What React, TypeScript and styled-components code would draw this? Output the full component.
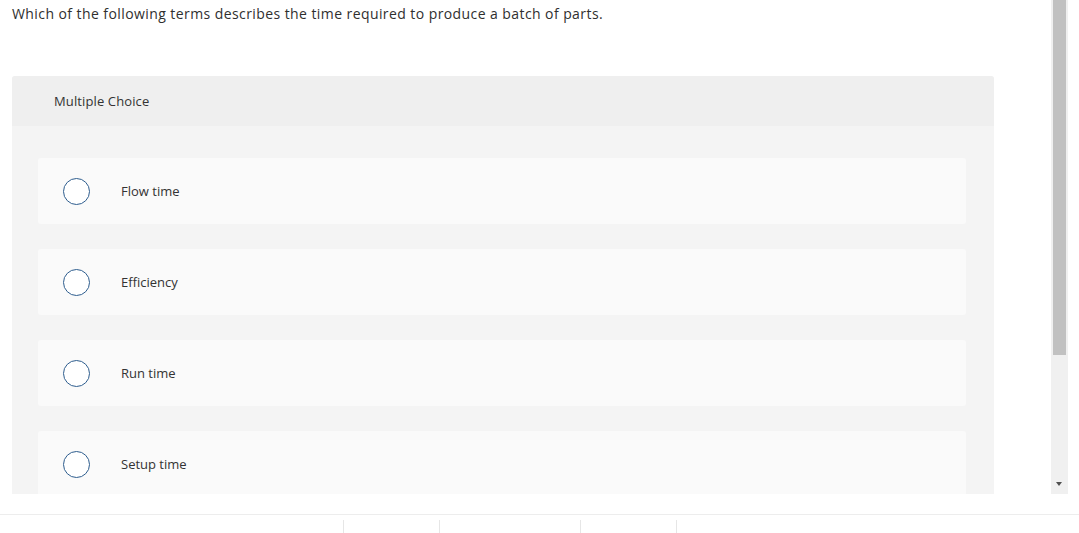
import styled, { createGlobalStyle } from "styled-components";

const GlobalStyle = createGlobalStyle`
  html, body {
    margin: 0;
    padding: 0;
    background: #ffffff;
    font-family: "Open Sans", Arial, sans-serif;
    color: #333333;
  }
`;

const Page = styled.div`
  width: 1079px;
  height: 533px;
  overflow: hidden;
  display: flex;
  flex-direction: column;
`;

const Viewport = styled.div`
  height: 494px;
  display: flex;
  flex-direction: row;
`;

const Content = styled.div`
  width: 1051px;
  height: 494px;
  overflow: hidden;
  display: flex;
  flex-direction: column;
`;

const Question = styled.p`
  margin: 0;
  padding: 5px 0 0 12px;
  height: 71px;
  font-size: 14px;
  line-height: 18px;
  letter-spacing: 0.42px;
  color: #2f2f2f;
`;

const Panel = styled.div`
  margin-left: 12px;
  width: 982px;
  flex: 1;
  background: #f4f4f4;
  border-radius: 3px 3px 0 0;
  overflow: hidden;
`;

const PanelHeader = styled.div`
  height: 50px;
  background: #efefef;
  display: flex;
  align-items: center;
  padding-left: 42px;
  font-size: 13px;
  letter-spacing: 0.12px;
  color: #333333;
`;

const Choices = styled.div`
  display: flex;
  flex-direction: column;
  gap: 25px;
  padding: 32px 28px 0 26px;
`;

const Choice = styled.label`
  height: 66px;
  flex-shrink: 0;
  background: #fafafa;
  border-radius: 3px;
  display: flex;
  align-items: center;
  padding-left: 25px;
  font-size: 13px;
  color: #333333;
  cursor: pointer;
`;

const Radio = styled.span`
  width: 25px;
  height: 25px;
  border-radius: 50%;
  border: 1.5px solid #2e5d8e;
  background: #ffffff;
  flex-shrink: 0;
  margin-right: 31px;
`;

const Scrollbar = styled.div`
  width: 17px;
  height: 494px;
  background: #f0f0f0;
  position: relative;
`;

const Thumb = styled.div`
  margin-left: 2px;
  width: 13px;
  height: 355px;
  background: #c1c1c1;
`;

const DownArrow = styled.div`
  position: absolute;
  left: 5px;
  top: 482px;
  width: 0;
  height: 0;
  border-left: 3.5px solid transparent;
  border-right: 3.5px solid transparent;
  border-top: 4px solid #505050;
`;

const Footer = styled.div`
  margin-top: 20px;
  border-top: 1px solid #ededed;
  display: flex;
  padding: 5px 0 0 343px;
  height: 14px;
`;

const FooterCell = styled.div<{ $w: number }>`
  width: ${p => p.$w}px;
  border-left: 1px solid #e6e6e6;
`;

const options = ["Flow time", "Efficiency", "Run time", "Setup time"];

export default function App() {
  return (
    <Page>
      <GlobalStyle />
      <Viewport>
        <Content>
          <Question>
            Which of the following terms describes the time required to produce a batch of parts.
          </Question>
          <Panel>
            <PanelHeader>Multiple Choice</PanelHeader>
            <Choices>
              {options.map(o => (
                <Choice key={o}>
                  <Radio />
                  {o}
                </Choice>
              ))}
            </Choices>
          </Panel>
        </Content>
        <Scrollbar>
          <Thumb />
          <DownArrow />
        </Scrollbar>
      </Viewport>
      <Footer>
        <FooterCell $w={95} />
        <FooterCell $w={140} />
        <FooterCell $w={95} />
        <FooterCell $w={1} />
      </Footer>
    </Page>
  );
}
